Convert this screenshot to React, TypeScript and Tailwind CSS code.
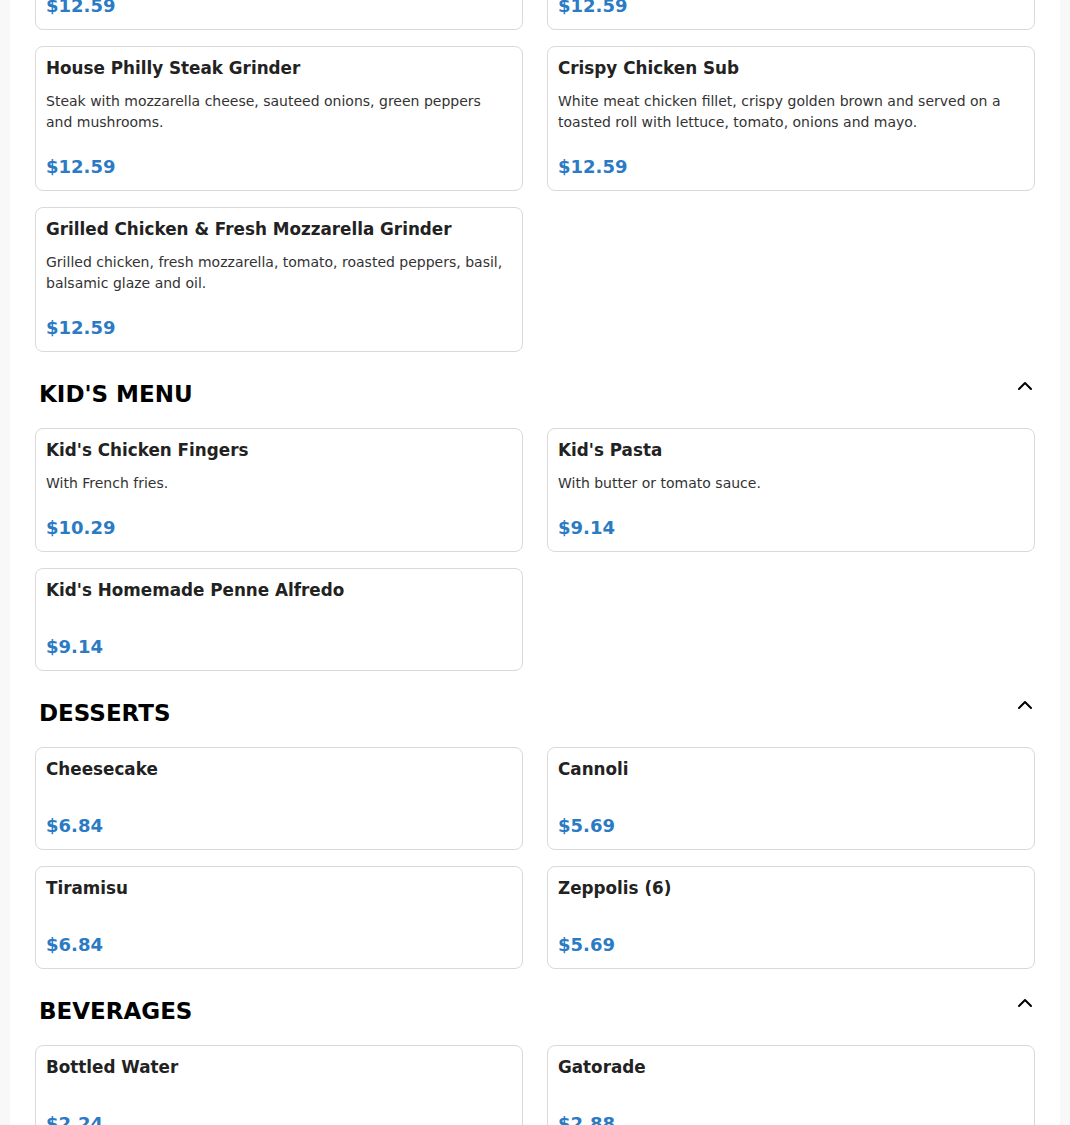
import { ChevronUp } from 'lucide-react';

type Item = {
  name: string;
  description?: string;
  price: string;
};

type Section = {
  title: string;
  items: Item[];
};

const sections: Section[] = [
  {
    title: 'Grinders',
    items: [
      {
        name: 'Italian Grinder',
        description: 'Ham, salami, capicola, provolone cheese, lettuce, tomato, onions, oil and vinegar.',
        price: '$12.59',
      },
      {
        name: 'Chicken Parmigiana Grinder',
        description: 'Breaded chicken cutlet with marinara sauce and melted mozzarella cheese.',
        price: '$12.59',
      },
      {
        name: 'House Philly Steak Grinder',
        description: 'Steak with mozzarella cheese, sauteed onions, green peppers and mushrooms.',
        price: '$12.59',
      },
      {
        name: 'Crispy Chicken Sub',
        description: 'White meat chicken fillet, crispy golden brown and served on a toasted roll with lettuce, tomato, onions and mayo.',
        price: '$12.59',
      },
      {
        name: 'Grilled Chicken & Fresh Mozzarella Grinder',
        description: 'Grilled chicken, fresh mozzarella, tomato, roasted peppers, basil, balsamic glaze and oil.',
        price: '$12.59',
      },
    ],
  },
  {
    title: "Kid's Menu",
    items: [
      { name: "Kid's Chicken Fingers", description: 'With French fries.', price: '$10.29' },
      { name: "Kid's Pasta", description: 'With butter or tomato sauce.', price: '$9.14' },
      { name: "Kid's Homemade Penne Alfredo", price: '$9.14' },
    ],
  },
  {
    title: 'Desserts',
    items: [
      { name: 'Cheesecake', price: '$6.84' },
      { name: 'Cannoli', price: '$5.69' },
      { name: 'Tiramisu', price: '$6.84' },
      { name: 'Zeppolis (6)', price: '$5.69' },
    ],
  },
  {
    title: 'Beverages',
    items: [
      { name: 'Bottled Water', price: '$2.24' },
      { name: 'Gatorade', price: '$2.88' },
      { name: 'Soda (20 oz)', price: '$2.88' },
      { name: 'Iced Tea', price: '$2.88' },
    ],
  },
];

function MenuCard({ item }: { item: Item }) {
  return (
    <div className="flex flex-col rounded-lg border border-[#d9d9d9] bg-white pt-[9px] pr-4 pb-[11px] pl-[10px]">
      <h3 className="mb-[11px] text-[16.8px] leading-6 font-bold text-[#222]">{item.name}</h3>
      {item.description && (
        <p className="text-sm leading-[21px] text-[#333]">{item.description}</p>
      )}
      <div className="mt-[22px] text-lg leading-6 font-bold text-[#2b7bc4]">{item.price}</div>
    </div>
  );
}

export default function App() {
  return (
    <div className="h-[1125px] overflow-hidden bg-[#f8f8f8] px-[10px] font-['DejaVu_Sans',sans-serif]">
      <div className="min-h-full bg-white px-[25px] pb-10">
        {sections.map((section, i) => (
          <section key={section.title} className={i === 0 ? 'mt-[-115px]' : 'mt-6'}>
            {i > 0 && (
              <div className="mb-4 flex items-start justify-between pl-1">
                <h2 className="text-[23px] leading-9 font-bold text-black uppercase">{section.title}</h2>
                <button className="-mt-0.5 -mr-0.5 text-black">
                  <ChevronUp size={24} />
                </button>
              </div>
            )}
            <div className="grid grid-cols-2 gap-x-6 gap-y-4">
              {section.items.map((item) => (
                <MenuCard key={item.name} item={item} />
              ))}
            </div>
          </section>
        ))}
      </div>
    </div>
  );
}
